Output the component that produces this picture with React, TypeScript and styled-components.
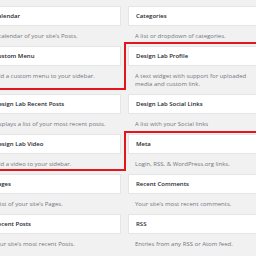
import React from 'react';
import styled, { createGlobalStyle } from 'styled-components';

const GlobalStyle = createGlobalStyle`
  html, body {
    margin: 0;
    padding: 0;
    background: #f1f1f1;
    overflow: hidden;
  }
  body {
    font-family: "Open Sans", "Liberation Sans", sans-serif;
  }
`;

const PageWrapper = styled.div`
  position: relative;
  width: 256px;
  height: 256px;
  overflow: hidden;
`;

const WidgetGrid = styled.div`
  display: grid;
  grid-template-columns: 135px 135px;
  column-gap: 7px;
  margin: 6px 0 0 -14px;
`;

const Widget = styled.div`
  display: flex;
  flex-direction: column;
`;

const TitleBox = styled.div`
  box-sizing: border-box;
  height: 20px;
  padding: 0 7px;
  display: flex;
  align-items: center;
  background: #fff;
  border: 1px solid #e5e5e5;
  color: #23282d;
  font-size: 6px;
  font-weight: 600;
  white-space: nowrap;
`;

const Description = styled.div`
  padding: 6px 7px 6px;
  color: #72777c;
  font-size: 6px;
  line-height: 8px;
`;

const Highlight = styled.svg`
  position: absolute;
  left: 0;
  top: 0;
  pointer-events: none;
`;

const widgets = [
  { title: 'Calendar', desc: 'A calendar of your site’s Posts.' },
  { title: 'Categories', desc: 'A list or dropdown of categories.' },
  { title: 'Custom Menu', desc: 'Add a custom menu to your sidebar.' },
  { title: 'Design Lab Profile', desc: 'A text widget with support for uploaded media and custom link.' },
  { title: 'Design Lab Recent Posts', desc: 'Displays a list of your most recent posts.' },
  { title: 'Design Lab Social Links', desc: 'A list with your Social links' },
  { title: 'Design Lab Video', desc: 'Add a video to your sidebar.' },
  { title: 'Meta', desc: 'Login, RSS, & WordPress.org links.' },
  { title: 'Pages', desc: 'A list of your site’s Pages.' },
  { title: 'Recent Comments', desc: 'Your site’s most recent comments.' },
  { title: 'Recent Posts', desc: 'Your site’s most recent Posts.' },
  { title: 'RSS', desc: 'Entries from any RSS or Atom feed.' },
];

export default function App() {
  return (
    <PageWrapper>
      <GlobalStyle />
      <WidgetGrid>
        {widgets.map((w) => (
          <Widget key={w.title}>
            <TitleBox>{w.title}</TitleBox>
            <Description>{w.desc}</Description>
          </Widget>
        ))}
      </WidgetGrid>
      <Highlight width={256} height={256} viewBox="0 0 256 256">
        <polyline points="262,43 125,43 125,89 -6,89" fill="none" stroke="#e3161d" strokeWidth={2} />
        <polyline points="262,132 125,132 125,170 -6,170" fill="none" stroke="#e3161d" strokeWidth={2} />
      </Highlight>
    </PageWrapper>
  );
}
